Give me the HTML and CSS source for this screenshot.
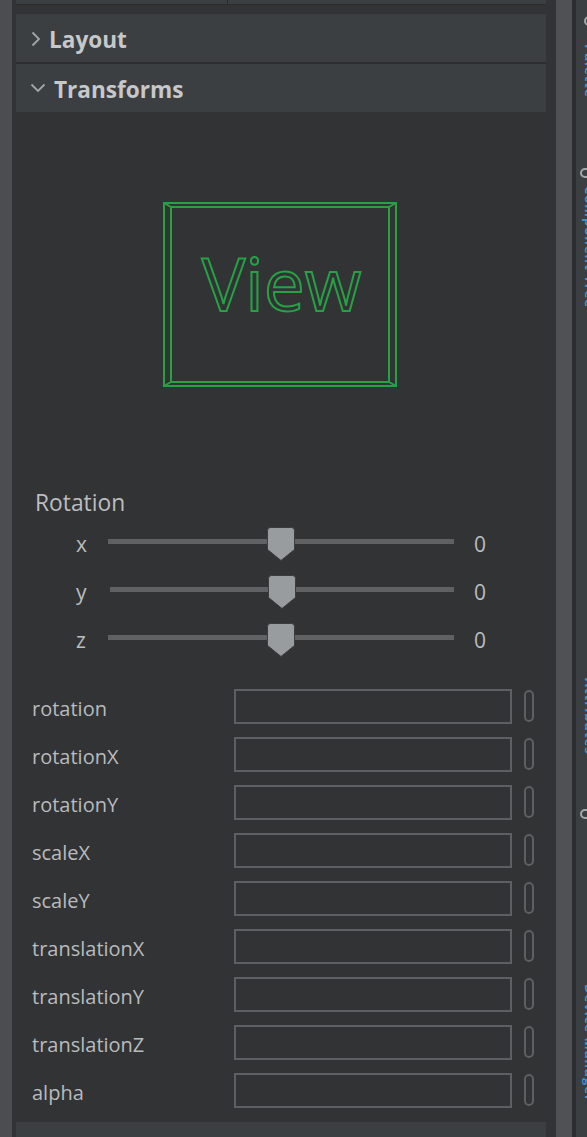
FILE: index.html
```html
<!DOCTYPE html>
<html>
<head>
<meta charset="utf-8">
<link rel="stylesheet" href="styles.css">
</head>
<body>
<div class="app">
  <div class="lstrip"></div>
  <div class="main">
    <div class="topbar"><div class="tcell tcell-a"></div><div class="tcell"></div></div>
    <div class="sect-head sect-sep">
      <svg class="chev-r" width="10" height="16" viewBox="0 0 10 16"><path d="M1.5 1.5 L8 8 L1.5 14.5" fill="none" stroke="#a3a6a8" stroke-width="1.8"/></svg>
      <span class="sect-title">Layout</span>
    </div>
    <div class="sect-head">
      <svg class="chev-d" width="16" height="10" viewBox="0 0 16 10"><path d="M1.5 1.5 L8 8 L14.5 1.5" fill="none" stroke="#a3a6a8" stroke-width="1.8"/></svg>
      <span class="sect-title">Transforms</span>
    </div>
    <div class="sect-body">
      <div class="preview">
        <div class="viewbox">
          <svg class="frame" width="234" height="185" viewBox="0 0 234 185">
            <g fill="none" stroke="#26a245" stroke-width="2">
              <rect x="1" y="1" width="232" height="183"/>
              <rect x="8" y="5" width="218" height="175"/>
              <path d="M1 1 L8 5 M233 1 L226 5 M1 184 L8 180 M233 184 L226 180"/>
            </g>
          </svg>
          <span class="viewtext">View</span>
        </div>
      </div>
      <div class="rot-title">Rotation</div>
      <div class="slider-row">
        <span class="axis">x</span>
        <div class="track"><svg class="thumb" width="28" height="34" viewBox="0 0 28 34"><path d="M3.5 0.5 H24.5 Q27.5 0.5 27.5 3.5 V22.5 L14 33.5 L0.5 22.5 V3.5 Q0.5 0.5 3.5 0.5 Z" fill="#999c9e" stroke="#3a3c3e" stroke-width="1"/></svg></div>
        <span class="val">0</span>
      </div>
      <div class="slider-row">
        <span class="axis axis-wide">y</span>
        <div class="track track-short"><svg class="thumb" width="28" height="34" viewBox="0 0 28 34"><path d="M3.5 0.5 H24.5 Q27.5 0.5 27.5 3.5 V22.5 L14 33.5 L0.5 22.5 V3.5 Q0.5 0.5 3.5 0.5 Z" fill="#999c9e" stroke="#3a3c3e" stroke-width="1"/></svg></div>
        <span class="val">0</span>
      </div>
      <div class="slider-row">
        <span class="axis">z</span>
        <div class="track"><svg class="thumb" width="28" height="34" viewBox="0 0 28 34"><path d="M3.5 0.5 H24.5 Q27.5 0.5 27.5 3.5 V22.5 L14 33.5 L0.5 22.5 V3.5 Q0.5 0.5 3.5 0.5 Z" fill="#999c9e" stroke="#3a3c3e" stroke-width="1"/></svg></div>
        <span class="val">0</span>
      </div>
      <div class="props">
        <div class="prop"><span class="plabel">rotation</span><div class="pbox"></div><div class="pill"></div></div>
        <div class="prop"><span class="plabel">rotationX</span><div class="pbox"></div><div class="pill"></div></div>
        <div class="prop"><span class="plabel">rotationY</span><div class="pbox"></div><div class="pill"></div></div>
        <div class="prop"><span class="plabel">scaleX</span><div class="pbox"></div><div class="pill"></div></div>
        <div class="prop"><span class="plabel">scaleY</span><div class="pbox"></div><div class="pill"></div></div>
        <div class="prop"><span class="plabel">translationX</span><div class="pbox"></div><div class="pill"></div></div>
        <div class="prop"><span class="plabel">translationY</span><div class="pbox"></div><div class="pill"></div></div>
        <div class="prop"><span class="plabel">translationZ</span><div class="pbox"></div><div class="pill"></div></div>
        <div class="prop"><span class="plabel">alpha</span><div class="pbox"></div><div class="pill"></div></div>
      </div>
    </div>
    <div class="sect-head sect-foot"></div>
  </div>
  <div class="vscroll"></div>
  <div class="vsep"></div>
  <div class="side">
    <div class="side-inner">
      <span class="side-icon"></span>
      <span class="side-label side-l1">Palette</span>
      <span class="side-icon side-icon-2"></span>
      <span class="side-label side-l2">Component Tree</span>
      <span class="side-label side-l3">Attributes</span>
      <span class="side-icon side-icon-3"></span>
      <span class="side-label side-l4">Device Manager</span>
    </div>
  </div>
</div>
</body>
</html>
```

FILE: styles.css
```css
* { box-sizing: border-box; }
html, body {
  margin: 0;
  padding: 0;
  background: #313335;
  width: 587px;
  height: 1137px;
  overflow: hidden;
  font-family: "Open Sans", "Noto Sans", "DejaVu Sans", sans-serif;
  color: #bbbdbf;
}
.app {
  display: flex;
  width: 587px;
  height: 1137px;
}
.lstrip {
  width: 12px;
  flex: none;
  background: #4b4e50;
}
.main {
  width: 544px;
  flex: none;
  background: #313335;
  overflow: hidden;
}
.topbar {
  display: flex;
  height: 5px;
  margin: 0 10px 9px 4px;
  background: #3c3f41;
  border-bottom: 1px solid #2a2c2e;
}
.tcell { flex: 1; }
.tcell-a {
  flex: none;
  width: 212px;
  border-right: 1px solid #2a2c2e;
}
.sect-head {
  display: flex;
  align-items: center;
  height: 48px;
  margin: 0 10px 0 4px;
  padding-left: 15px;
  background: #3c3f41;
}
.sect-sep {
  height: 50px;
  border-bottom: 2px solid #2b2d30;
}
.chev-r { flex: none; margin-right: 8px; margin-top: 1px; }
.chev-d { flex: none; margin-right: 8px; margin-top: 0; margin-left: -1px; }
.sect-title {
  font-size: 22.6px;
  font-weight: 700;
  color: #c6c8ca;
  line-height: 28px;
  padding-top: 3px;
}
.sect-foot { margin-top: 8px; }
.preview {
  padding-top: 90px;
  padding-left: 151px;
}
.viewbox {
  position: relative;
  width: 234px;
  height: 185px;
  display: flex;
  justify-content: center;
  align-items: flex-start;
  padding-top: 44px;
}
.frame {
  position: absolute;
  left: 0;
  top: 0;
}
.viewtext {
  font-size: 73px;
  line-height: 73px;
  color: transparent;
  -webkit-text-stroke: 2px #26a245;
  margin-left: 3px;
}
.rot-title {
  margin-top: 100px;
  padding-left: 23px;
  padding-top: 2px;
  font-size: 22.8px;
  line-height: 28px;
  color: #bbbdbf;
}
.slider-row {
  display: flex;
  align-items: center;
  height: 48px;
  padding-left: 64px;
}
.axis {
  width: 32px;
  flex: none;
  font-size: 21px;
  line-height: 28px;
  padding-top: 6px;
}
.axis-wide { width: 34px; }
.track {
  position: relative;
  width: 346px;
  height: 5px;
  flex: none;
  background: #5f6163;
}
.track-short { width: 344px; }
.thumb {
  position: absolute;
  left: calc(50% - 14px);
  top: -12px;
}
.val {
  margin-left: 20px;
  font-size: 21px;
  line-height: 28px;
  padding-top: 6px;
}
.props { margin-top: 21px; }
.prop {
  display: flex;
  align-items: center;
  height: 48px;
  padding-left: 20px;
}
.plabel {
  width: 202px;
  flex: none;
  font-size: 20px;
  line-height: 28px;
  padding-top: 5px;
  color: #b9bbbd;
}
.pbox {
  width: 278px;
  height: 35px;
  flex: none;
  border: 2px solid #5d6062;
}
.pill {
  width: 10px;
  height: 32px;
  flex: none;
  margin-left: 12px;
  border: 2px solid #5d6062;
  border-radius: 6px;
}
.vscroll {
  width: 16px;
  flex: none;
  background: #4e5254;
}
.vsep {
  width: 4px;
  flex: none;
  background: #2b2d2f;
}
.side {
  width: 11px;
  flex: none;
  background: #3c3f41;
  overflow: hidden;
}
.side-inner {
  width: 30px;
  display: flex;
  flex-direction: column;
  align-items: flex-start;
  padding-left: 7px;
}
.side-icon {
  display: block;
  width: 12px;
  height: 10px;
  flex: none;
  margin-top: 16px;
  border: 2px solid #a5a8aa;
  border-radius: 6px;
  margin-left: 1px;
}
.side-label {
  writing-mode: vertical-rl;
  font-size: 13px;
  line-height: 14px;
  color: #3e92cc;
  font-weight: 700;
  letter-spacing: 1px;
  flex: none;
}
.side-l1 { margin-top: 18px; }
.side-icon-2 { margin-top: 70px; margin-left: -3px; }
.side-l2 { margin-top: 8px; }
.side-l3 { margin-top: 370px; }
.side-icon-3 { margin-top: 55px; margin-left: -3px; }
.side-l4 { margin-top: 165px; }
```
